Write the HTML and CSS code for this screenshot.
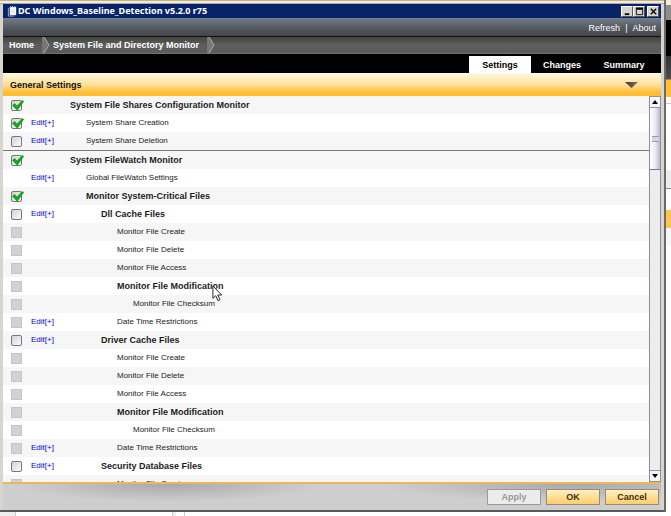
FILE: index.html
```html
<!DOCTYPE html>
<html lang="en">
<head>
<meta charset="utf-8">
<title>DC Windows_Baseline_Detection v5.2.0 r75</title>
<link rel="stylesheet" href="styles.css">
</head>
<body>
<svg class="defs" aria-hidden="true">
  <symbol id="tick" viewBox="0 0 12 11"><path d="M.5 5.300 2.800 3.500l2 2.500L10.300 .4l1.300 1L5.300 10.300z" fill="#0fae12" stroke="#0a8510" stroke-width=".6"/></symbol>
</svg>
<div class="desktop">
  <main class="window">
    <header class="titlebar">
      <svg class="app-icon" viewBox="0 0 12 12"><path d="M3 1h7v9H3z" fill="#fff"/><path d="M1.500 2v9H8M4 0v2M6 0v2M8 0v2" fill="none" stroke="#9fb2d8"/><path d="M4 4h5M4 6h5M4 8h5" stroke="#c3c9d8" stroke-width=".7"/></svg>
      <h1 class="title">DC Windows_Baseline_Detection v5.2.0 r75</h1>
      <div class="controls">
        <button class="control" aria-label="Minimize"><svg viewBox="0 0 10 10"><path d="M2 8h5" stroke="#000" stroke-width="2"/></svg></button>
        <button class="control" aria-label="Maximize"><svg viewBox="0 0 10 10"><path d="M1.500 2.500h7v6h-7z" fill="none" stroke="#000"/><path d="M1 1.500h8" stroke="#000" stroke-width="2"/></svg></button>
        <button class="control close" aria-label="Close"><svg viewBox="0 0 10 10"><path d="M2 2l6 6M8 2l-6 6" stroke="#000" stroke-width="1.500"/></svg></button>
      </div>
    </header>
    <div class="toolbar"><a href="#refresh">Refresh</a><span class="bar">|</span><a href="#about">About</a></div>
    <nav class="crumbs">
      <a href="#home">Home</a>
      <svg class="chevron" viewBox="0 0 8 16"><path d="M0 0h2l5 8-5 8H0z" fill="#777"/><path d="M2 0l5 8-5 8" fill="none" stroke="#aaa"/></svg>
      <a href="#monitor">System File and Directory Monitor</a>
      <svg class="chevron" viewBox="0 0 8 16"><path d="M0 0h2l5 8-5 8H0z" fill="#777"/><path d="M2 0l5 8-5 8" fill="none" stroke="#aaa"/></svg>
    </nav>
    <nav class="tabs">
      <a class="tab current" href="#settings">Settings</a>
      <a class="tab" href="#changes">Changes</a>
      <a class="tab" href="#summary">Summary</a>
    </nav>
    <div class="section-head">
      <h2>General Settings</h2>
      <svg class="fold" viewBox="0 0 13 6"><defs><linearGradient id="g"><stop offset="0" stop-color="#3a3035"/><stop offset="1" stop-color="#8a7560"/></linearGradient></defs><path d="M0 0h13L6.500 6z" fill="url(#g)"/></svg>
    </div>
    <div class="content">
      <div class="list">
        <ul class="group">
          <li class="row strong"><input type="checkbox" id="c1" checked><svg class="tick"><use href="#tick"/></svg><label for="c1">System File Shares Configuration Monitor</label></li>
          <li class="row l1"><input type="checkbox" id="c2" checked><svg class="tick"><use href="#tick"/></svg><a href="#edit">Edit[+]</a><label for="c2">System Share Creation</label></li>
          <li class="row l1"><input type="checkbox" id="c3"><a href="#edit">Edit[+]</a><label for="c3">System Share Deletion</label></li>
        </ul>
        <ul class="group">
          <li class="row strong"><input type="checkbox" id="c4" checked><svg class="tick"><use href="#tick"/></svg><label for="c4">System FileWatch Monitor</label></li>
          <li class="row l1"><a href="#edit">Edit[+]</a><span class="name">Global FileWatch Settings</span></li>
          <li class="row l1 strong"><input type="checkbox" id="c6" checked><svg class="tick"><use href="#tick"/></svg><label for="c6">Monitor System-Critical Files</label></li>
          <li class="row l2 strong"><input type="checkbox" id="c7"><a href="#edit">Edit[+]</a><label for="c7">Dll Cache Files</label></li>
          <li class="row l3"><input type="checkbox" id="c8" disabled><label for="c8">Monitor File Create</label></li>
          <li class="row l3"><input type="checkbox" id="c9" disabled><label for="c9">Monitor File Delete</label></li>
          <li class="row l3"><input type="checkbox" id="c10" disabled><label for="c10">Monitor File Access</label></li>
          <li class="row l3 strong"><input type="checkbox" id="c11" disabled><label for="c11">Monitor File Modification</label></li>
          <li class="row l4"><input type="checkbox" id="c12" disabled><label for="c12">Monitor File Checksum</label></li>
          <li class="row l3"><input type="checkbox" id="c13" disabled><a href="#edit">Edit[+]</a><label for="c13">Date Time Restrictions</label></li>
          <li class="row l2 strong"><input type="checkbox" id="c14"><a href="#edit">Edit[+]</a><label for="c14">Driver Cache Files</label></li>
          <li class="row l3"><input type="checkbox" id="c15" disabled><label for="c15">Monitor File Create</label></li>
          <li class="row l3"><input type="checkbox" id="c16" disabled><label for="c16">Monitor File Delete</label></li>
          <li class="row l3"><input type="checkbox" id="c17" disabled><label for="c17">Monitor File Access</label></li>
          <li class="row l3 strong"><input type="checkbox" id="c18" disabled><label for="c18">Monitor File Modification</label></li>
          <li class="row l4"><input type="checkbox" id="c19" disabled><label for="c19">Monitor File Checksum</label></li>
          <li class="row l3"><input type="checkbox" id="c20" disabled><a href="#edit">Edit[+]</a><label for="c20">Date Time Restrictions</label></li>
          <li class="row l2 strong"><input type="checkbox" id="c21"><a href="#edit">Edit[+]</a><label for="c21">Security Database Files</label></li>
          <li class="row l3"><input type="checkbox" id="c22" disabled><label for="c22">Monitor File Create</label></li>
        </ul>
      </div>
      <div class="scrollbar">
        <button class="arrow" aria-label="Scroll up"><svg viewBox="0 0 6 4"><path d="M0 4l3-4 3 4z"/></svg></button>
        <div class="thumb"></div>
        <button class="arrow down" aria-label="Scroll down"><svg viewBox="0 0 6 4"><path d="M0 0l3 4 3-4z"/></svg></button>
      </div>
    </div>
    <footer class="actions">
      <button class="action" disabled>Apply</button>
      <button class="action">OK</button>
      <button class="action">Cancel</button>
    </footer>
  </main>
  <div class="behind-right"></div>
  <div class="behind-bottom"></div>
  <svg class="pointer" viewBox="0 0 10 16"><path d="M.7 1v11.500l2.700-2.500 2 4.700 1.900-.8-2-4.500H9z" fill="#fff" stroke="#222" stroke-width=".9"/></svg>
</div>
</body>
</html>
```

FILE: styles.css
```css
* { box-sizing: border-box; }

body {
  margin: 0;
  font: 9px/18px "Liberation Sans", Arial, sans-serif;
  color: #222;
}

h1, h2, ul { margin: 0; padding: 0; font-size: 9px; }
ul { list-style: none; }
a { text-decoration: none; }
svg { display: block; }
button { padding: 0; font: inherit; }
.defs { display: none; }

.desktop {
  position: relative;
  display: grid;
  grid-template: minmax(0, 1fr) 4px / minmax(0, 1fr) 5px;
  height: 100vh;
}

.window {
  display: flex;
  flex-direction: column;
  min-height: 0;
  padding: 4px 3px 0;
  background: linear-gradient(#c5b184 0 1px, #f4ead8 1px 3px, #a9a9b3 3px 4px, #d8d5cf 4px);
  border-right: 2px solid #6c6969;
  border-bottom: 2px solid #5a5a5e;
}

.titlebar {
  display: flex;
  align-items: center;
  height: 15px;
  padding: 0 2px 0 4px;
  background: #082369;
  border-bottom: 1px solid #6f8295;
  color: #fff;
}
.app-icon { width: 11px; height: 11px; }
.title {
  flex: 1;
  font: bold 9px/14px "Noto Sans", "DejaVu Sans", sans-serif;
}
.controls { display: flex; }
.control {
  display: grid;
  place-items: center;
  width: 12px;
  height: 11px;
  background: #d6d3ce;
  border: 1px solid;
  border-color: #fff #555 #555 #fff;
}
.control.close { margin-left: 2px; }
.control svg { width: 9px; height: 9px; }

.toolbar {
  display: flex;
  justify-content: flex-end;
  gap: 5px;
  height: 18px;
  padding-right: 5px;
  background: linear-gradient(#747783, #555b62 50%, #42454a);
  border-bottom: 1px solid #111;
  color: #fff;
}
.toolbar a { color: #fff; }

.crumbs {
  display: flex;
  align-items: center;
  height: 17px;
  padding-left: 6px;
  background: linear-gradient(#41443d, #5e5e5e 50%, #5b5b5b);
  border-bottom: 1px solid #707070;
  font-weight: bold;
}
.crumbs a { color: #fff; }
.chevron { width: 8px; height: 16px; margin: 0 3px 0 8px; }

.tabs {
  display: flex;
  justify-content: flex-end;
  align-items: flex-end;
  height: 19px;
  padding-right: 6px;
  background: #000;
}
.tab {
  width: 62px;
  height: 17px;
  color: #fff;
  font-weight: bold;
  text-align: center;
}
.tab.current { background: #fff; color: #000; }

.section-head {
  display: flex;
  justify-content: space-between;
  align-items: center;
  height: 23px;
  padding: 0 23px 0 7px;
  background: linear-gradient(#fff9e3, #fee09a 50%, #ffbd31 85%);
  color: #111;
}
.fold { width: 13px; height: 6px; }

.content {
  display: flex;
  flex: 1;
  min-height: 0;
  background: #fff;
}
.list { flex: 1; min-width: 0; overflow: hidden; }
.group + .group { border-top: 1px solid #777; }

.row {
  display: grid;
  grid-template-columns: 20px 39px minmax(0, 1fr);
  grid-template-rows: 18px;
  align-items: center;
  height: 18px;
  padding-left: 8px;
  font-size: 8px;
  line-height: 20px;
}
.row:nth-child(odd) { background: #f6f6f6; }
.row > input { grid-area: 1 / 1; }
.row > a { grid-area: 1 / 2; color: #00d; }
.row > label, .row > .name { grid-area: 1 / 3; }
.row.strong > label {
  font-weight: bold;
  font-size: 9px;
  color: #1c1c1c;
}
.l1 > label, .l1 > .name { padding-left: 16px; }
.l2 > label { padding-left: 31px; }
.l3 > label { padding-left: 47px; }
.l4 > label { padding-left: 63px; }

.row > input {
  appearance: none;
  width: 11px;
  height: 11px;
  margin: 0;
  border: 1px solid #777;
  border-radius: 2px;
  background: linear-gradient(135deg, #d4d4d4, #fafafa);
}
.row > input:disabled {
  border-color: #c6c6c6;
  border-radius: 0;
  background: #d2d2d2;
}
.tick {
  grid-area: 1 / 1;
  width: 12px;
  height: 11px;
  margin-left: 1px;
}

.scrollbar {
  display: flex;
  flex-direction: column;
  width: 12px;
  background: #ededed;
  border: solid #8c8ca5;
  border-width: 0 1px;
}
.arrow {
  display: grid;
  place-items: center;
  height: 12px;
  background: #f5f5f8;
  border: solid #9292b0;
  border-width: 1px 0;
}
.arrow.down { margin-top: auto; }
.arrow svg { width: 6px; height: 4px; }
.thumb {
  display: grid;
  place-items: center;
  height: 62px;
  background: linear-gradient(90deg, #fff, #ededf1 50%, #b9b9c8);
  border-bottom: 1px solid #777794;
}
.thumb::before {
  content: "";
  width: 7px;
  height: 4px;
  background: #d4d4ea;
  border: solid #9696c0;
  border-width: 1px 0;
}

.actions {
  display: flex;
  justify-content: flex-end;
  align-items: center;
  gap: 5px;
  height: 28px;
  padding-right: 2px;
  border-top: 2px solid #edb755;
  background:
    radial-gradient(ellipse 150px 18px at 165px 0, #a9a9a9, transparent),
    radial-gradient(ellipse 190px 18px at 570px 0, #a9a9a9, transparent),
    #cecece;
}
.action {
  width: 54px;
  height: 16px;
  border: 1px solid #8f8b80;
  background: linear-gradient(#fff0c4, #ffce69);
  color: #3b3014;
  font-weight: bold;
  line-height: 14px;
}
.action:disabled { background: #ececec; border-color: #999; color: #999; }

.behind-right {
  grid-area: 1 / 2 / 3 / 3;
  background: linear-gradient(
    #f4ead8 0 5px, #8d8d8d 5px 20px, #000 20px 56px, #333 56px, #4d4d4d 79px,
    #ffc036 80px 97px, #fff 97px 103px, #ccc 103px 104px, #fff 104px 170px,
    #ededed 170px 188px, #888 188px 189px, #fff 189px 210px,
    #ffc54d 210px 228px, #f7f7f7 228px 246px, #fff 246px);
}
.behind-bottom {
  background: linear-gradient(90deg, #eee 0 15px, #ccc 15px 16px, #fff 16px 172px, #ccc 172px 173px, #eee 173px 176px, #fff 176px 184px, #ccc 184px 185px, #fff 185px);
}

.pointer {
  position: absolute;
  left: 212px;
  top: 285px;
  width: 11px;
  height: 17px;
}
```
